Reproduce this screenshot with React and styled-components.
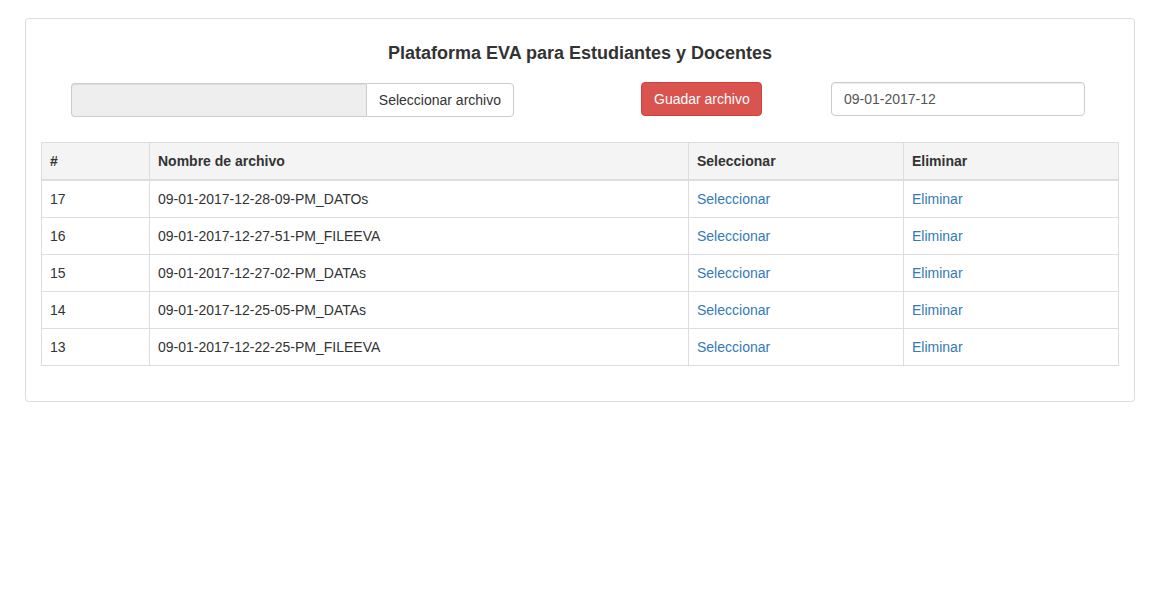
import React from "react";
import styled, { createGlobalStyle } from "styled-components";

const GlobalStyle = createGlobalStyle`
  body {
    margin: 0;
    background: #fff;
    font-family: "Liberation Sans", Arial, sans-serif;
    font-size: 14px;
    line-height: 20px;
    color: #333;
  }
`;

const Page = styled.div`
  padding: 18px 20px 0 25px;
`;

const Panel = styled.div`
  border: 1px solid #ddd;
  border-radius: 4px;
  padding: 15px;
  box-shadow: 0 1px 1px rgba(0, 0, 0, 0.05);
`;

const Title = styled.h3`
  margin: 9px 0 19px;
  text-align: center;
  font-size: 18px;
  line-height: 20px;
  font-weight: bold;
  color: #333;
`;

const FormRow = styled.div`
  display: flex;
  align-items: flex-start;
  padding-left: 30px;
`;

const FileGroup = styled.div`
  display: flex;
  width: 443px;
  height: 34px;
  margin-top: 1px;
`;

const FileName = styled.div`
  flex: 1;
  background: #eee;
  border: 1px solid #ccc;
  border-right: none;
  border-radius: 4px 0 0 4px;
  box-shadow: inset 0 1px 1px rgba(0, 0, 0, 0.075);
`;

const Button = styled.button`
  font-family: inherit;
  font-size: 14px;
  line-height: 20px;
  padding: 6px 12px;
  height: 34px;
  border: 1px solid ${p => (p.$danger ? "#d43f3a" : "#ccc")};
  background: ${p => (p.$danger ? "#d9534f" : "#fff")};
  color: ${p => (p.$danger ? "#fff" : "#333")};
  border-radius: ${p => (p.$attached ? "0 4px 4px 0" : "4px")};
  cursor: pointer;
  white-space: nowrap;
`;

const SaveButton = styled(Button)`
  margin-left: 127px;
  width: 121px;
`;

const DateInput = styled.input`
  margin-left: 69px;
  width: 254px;
  height: 34px;
  box-sizing: border-box;
  padding: 6px 12px;
  font-family: inherit;
  font-size: 14px;
  color: #555;
  border: 1px solid #ccc;
  border-radius: 4px;
  box-shadow: inset 0 1px 1px rgba(0, 0, 0, 0.075);
  outline: none;
`;

const Table = styled.table`
  width: 100%;
  margin: 25px 0 20px;
  border-collapse: collapse;
  border: 1px solid #ddd;
  table-layout: fixed;
`;

const Th = styled.th`
  text-align: left;
  font-weight: bold;
  padding: 8px;
  background: #f4f4f4;
  border: 1px solid #ddd;
  border-bottom: 2px solid #ddd;
  width: ${p => p.$w || "auto"};
`;

const Td = styled.td`
  padding: 8px;
  border: 1px solid #ddd;
  vertical-align: top;
`;

const Link = styled.a`
  color: #337ab7;
  text-decoration: none;
  cursor: pointer;
`;

const files = [
  { id: 17, name: "09-01-2017-12-28-09-PM_DATOs" },
  { id: 16, name: "09-01-2017-12-27-51-PM_FILEEVA" },
  { id: 15, name: "09-01-2017-12-27-02-PM_DATAs" },
  { id: 14, name: "09-01-2017-12-25-05-PM_DATAs" },
  { id: 13, name: "09-01-2017-12-22-25-PM_FILEEVA" }
];

const App = () => {
  return (
    <Page>
      <GlobalStyle />
      <Panel>
        <Title>Plataforma EVA para Estudiantes y Docentes</Title>
        <FormRow>
          <FileGroup>
            <FileName />
            <Button $attached>Seleccionar archivo</Button>
          </FileGroup>
          <SaveButton $danger>Guadar archivo</SaveButton>
          <DateInput defaultValue="09-01-2017-12" />
        </FormRow>
        <Table>
          <thead>
            <tr>
              <Th $w="91px">#</Th>
              <Th $w="522px">Nombre de archivo</Th>
              <Th $w="198px">Seleccionar</Th>
              <Th>Eliminar</Th>
            </tr>
          </thead>
          <tbody>
            {files.map(file => (
              <tr key={file.id}>
                <Td>{file.id}</Td>
                <Td>{file.name}</Td>
                <Td>
                  <Link>Seleccionar</Link>
                </Td>
                <Td>
                  <Link>Eliminar</Link>
                </Td>
              </tr>
            ))}
          </tbody>
        </Table>
      </Panel>
    </Page>
  );
};

export default App;
